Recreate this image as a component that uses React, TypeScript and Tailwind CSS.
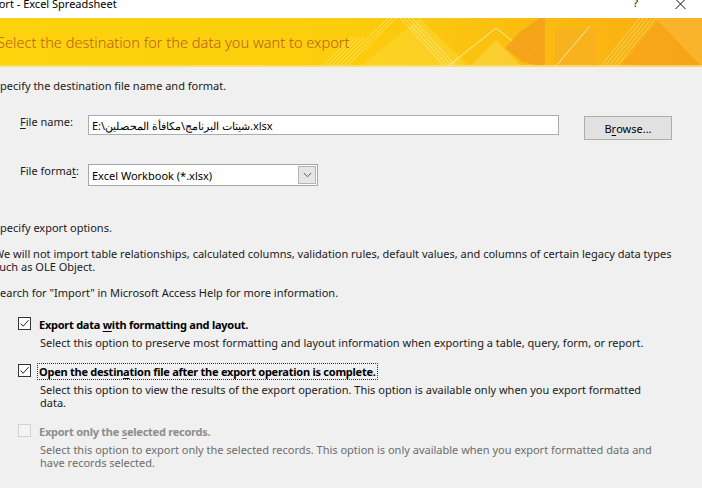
import React from "react";

const U = ({ children }: { children: React.ReactNode }) => <span className="underline underline-offset-[2px]">{children}</span>;

function Check({ checked, disabled }: { checked?: boolean; disabled?: boolean }) {
  return (
    <div
      className={`w-[13px] h-[13px] shrink-0 border ${disabled ? "border-[#d2d2d2] bg-[#f3f3f3]" : "border-[#333333] bg-white"} flex items-center justify-center`}
    >
      {checked && (
        <svg width="11" height="11" viewBox="0 0 11 11">
          <path d="M1.5 5.5 L4.2 8.2 L9.5 2.2" fill="none" stroke="#222" strokeWidth="1" />
        </svg>
      )}
    </div>
  );
}

function Banner() {
  return (
    <div className="relative h-[49px] overflow-hidden bg-[#fcd00e]">
      <svg className="absolute inset-0" width="702" height="49" viewBox="0 0 702 49">
        <defs>
          <linearGradient id="bg" x1="0" y1="0" x2="1" y2="0">
            <stop offset="0" stopColor="#fdd30c" />
            <stop offset="0.5" stopColor="#fccd0c" />
            <stop offset="0.75" stopColor="#fbbd10" />
            <stop offset="1" stopColor="#f8ab14" />
          </linearGradient>
        </defs>
        <rect width="702" height="49" fill="url(#bg)" />
        <g stroke="#fff2a0" strokeWidth="0.8" opacity="0.7">
          <line x1="322" y1="49" x2="352" y2="19" />
          <line x1="326" y1="49" x2="356" y2="19" />
          <line x1="330" y1="49" x2="360" y2="19" />
          <line x1="334" y1="49" x2="364" y2="19" />
          <line x1="338" y1="49" x2="388" y2="0" />
          <line x1="342" y1="49" x2="392" y2="0" />
          <line x1="346" y1="49" x2="396" y2="0" />
        </g>
        <polygon points="360,49 420,0 470,49" fill="#fde24a" opacity="0.35" />
        <g stroke="#fff3b0" strokeWidth="0.8" opacity="0.8">
          <line x1="400" y1="0" x2="445" y2="49" />
          <line x1="404" y1="0" x2="449" y2="49" />
          <line x1="408" y1="0" x2="453" y2="49" />
          <line x1="412" y1="0" x2="457" y2="49" />
        </g>
        <polyline points="447,49 496,10 545,49" fill="none" stroke="#fff4b8" strokeWidth="1" opacity="0.9" />
        <polygon points="470,49 496,22 522,49" fill="#fde870" opacity="0.35" />
        <polygon points="520,14 545,-4 545,49 522,44 505,30" fill="#f5a21c" opacity="0.9" />
        <rect x="555" y="10" width="40" height="39" fill="#f8b020" opacity="0.8" />
        <polyline points="555,49 590,8" fill="none" stroke="#fff4b8" strokeWidth="1" opacity="0.8" />
        <g stroke="#fde89a" strokeWidth="0.8" opacity="0.75">
          <line x1="600" y1="49" x2="640" y2="0" />
          <line x1="604" y1="49" x2="644" y2="0" />
          <line x1="608" y1="49" x2="648" y2="0" />
          <line x1="612" y1="49" x2="652" y2="0" />
          <line x1="616" y1="49" x2="656" y2="0" />
        </g>
        <polygon points="620,49 660,0 702,0 702,49" fill="#f6a31a" opacity="0.75" />
        <polygon points="655,0 702,49 702,0" fill="#fbbc3a" opacity="0.6" />
        <rect y="47" width="702" height="2" fill="#fde58c" opacity="0.7" />
      </svg>
      <div className="relative h-full flex items-center ml-[-3px] text-[14.6px] font-light text-[#b9611c]">
        Select the destination for the data you want to export
      </div>
    </div>
  );
}

export default function App() {
  return (
    <div
      className="w-[702px] h-[488px] overflow-hidden bg-[#f0f0f0] text-[#1a1a1a] text-[11px] leading-[13px]"
      style={{ fontFamily: '"Segoe UI", "Noto Sans", "Noto Sans CJK SC", sans-serif' }}
    >
      <div className="h-[18px] bg-white flex items-start overflow-hidden">
        <div className="ml-[-20px] mt-[-4px] leading-[16px] text-[11px] text-black flex-1">Export - Excel Spreadsheet</div>
        <div className="mt-[-5px] leading-[16px] text-[11px] text-black mr-[37px]">?</div>
        <svg className="mt-[-1px] mr-[16px]" width="11" height="10" viewBox="0 0 11 10">
          <path d="M0.5 0 L10.5 10 M10.5 0 L0.5 10" stroke="#111" strokeWidth="1" />
        </svg>
      </div>
      <Banner />
      <div className="ml-[-6px] flex flex-col">
        <div className="mt-[12px]">Specify the destination file name and format.</div>
        <div className="mt-[23px] flex items-start">
          <div className="ml-[26px] mt-[0px] w-[68px]"><U>F</U>ile name:</div>
          <div className="w-[471px] h-[20px] border border-[#abadb3] bg-white flex items-center pl-[3px] text-black">
            <span dir="ltr">E:\شيتات البرنامج\مكافأة المحصلين.xlsx</span>
          </div>
          <div className="ml-[25px] mt-[1px] w-[88px] h-[24px] border border-[#adadad] bg-[#e1e1e1] flex items-center justify-center text-black">
            B<U>r</U>owse...
          </div>
        </div>
        <div className="mt-[24px] flex items-start">
          <div className="ml-[26px] mt-[0px] w-[68px]">File forma<U>t</U>:</div>
          <div className="w-[230px] h-[22px] border border-[#a6a6a6] bg-white flex items-center pl-[3px] text-black">
            <span className="flex-1">Excel Workbook (*.xlsx)</span>
            <div className="w-[18px] h-[18px] mr-[1px] border border-[#b4b4b4] bg-[#e6e6e6] flex items-center justify-center">
              <svg width="9" height="6" viewBox="0 0 9 6">
                <path d="M0.8 1 L4.5 4.7 L8.2 1" fill="none" stroke="#555" strokeWidth="1" />
              </svg>
            </div>
          </div>
        </div>
        <div className="mt-[35px]">Specify export options.</div>
        <div className="mt-[13px] w-[690px]">
          We will not import table relationships, calculated columns, validation rules, default values, and columns of certain legacy data types such as OLE Object.
        </div>
        <div className="mt-[13px]">Search for "Import" in Microsoft Access Help for more information.</div>

        <div className="mt-[18px] ml-[24px] flex items-start">
          <Check checked />
          <div className="ml-[8px] mt-[0.5px] w-[620px]">
            <div className="font-bold text-black tracking-[-0.25px]">Export data <U>w</U>ith formatting and layout.</div>
            <div className="mt-[5px] ml-[1px]">Select this option to preserve most formatting and layout information when exporting a table, query, form, or report.</div>
          </div>
        </div>

        <div className="mt-[15.5px] ml-[24px] flex items-start">
          <Check checked />
          <div className="ml-[8px] mt-[0.5px] w-[620px]">
            <div className="font-bold text-black tracking-[-0.25px]">
              <span className="inline-block -ml-[2px] -my-[2px] px-[1px] py-[1px] border border-dotted border-[#333]">
                Open the destin<U>a</U>tion file after the export operation is complete.
              </span>
            </div>
            <div className="mt-[5px] ml-[1px]">Select this option to view the results of the export operation. This option is available only when you export formatted data.</div>
          </div>
        </div>

        <div className="mt-[15.5px] ml-[24px] flex items-start">
          <Check disabled />
          <div className="ml-[8px] mt-[0.5px] w-[620px]">
            <div className="font-bold text-[#8d8d8d] tracking-[-0.25px]">Export only the <U>s</U>elected records.</div>
            <div className="mt-[5px] ml-[1px] text-[#6d6d6d]">Select this option to export only the selected records. This option is only available when you export formatted data and have records selected.</div>
          </div>
        </div>
      </div>
    </div>
  );
}
